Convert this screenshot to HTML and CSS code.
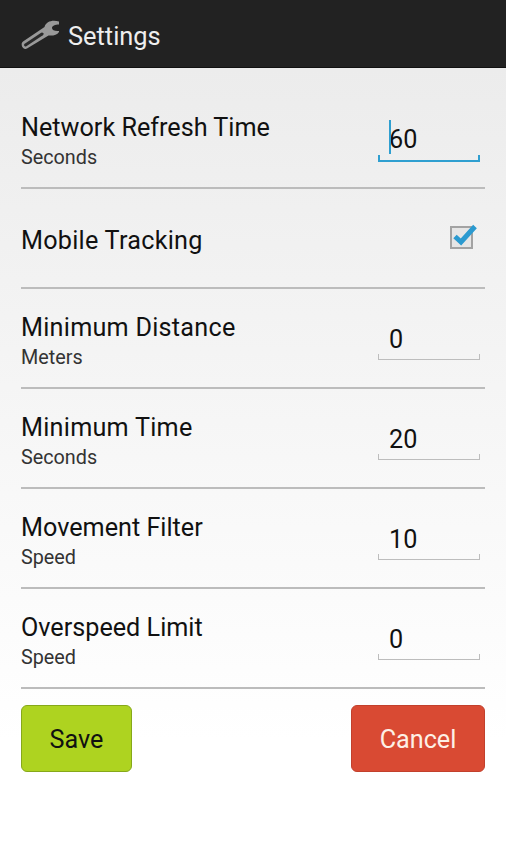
FILE: index.html
```html
<!DOCTYPE html>
<html lang="en">

<head>
  <meta charset="UTF-8">
  <title>Settings</title>
  <meta name="viewport" content="width=device-width, initial-scale=1.0">
  <link rel="stylesheet" href="styles.css">
</head>

<body>
  <header class="action-bar">
    <svg class="wrench" width="40" height="32" viewBox="0 0 40 32">
      <path fill="#999" d="M39 2.500C33 .5 26 2 24.500 8L3 22.500C-.5 25.500 3.500 31.500 7 29.500L28.500 16.500C33 17 37 16 39 13L39 12C35 12.500 32 11 32 9 32 7 35 5.500 39 5.500z" />
      <path fill="none" stroke="#2a2a2a" stroke-width="3" stroke-linecap="round" d="M5.500 26 22 15" />
    </svg>
    <span class="bar-title">Settings</span>
  </header>

  <main class="settings">
    <div class="row">
      <div class="labels">
        <div class="name">Network Refresh Time</div>
        <div class="unit">Seconds</div>
      </div>
      <div class="field focused"><span class="caret"></span>60</div>
    </div>

    <div class="row">
      <div class="labels single">
        <div class="name wide">Mobile Tracking</div>
      </div>
      <svg class="check" width="30" height="28" viewBox="0 0 30 28">
        <rect x="2" y="5" width="21" height="21" fill="#e6e6e6" stroke="#a3a3a3" stroke-width="2" />
        <path fill="none" stroke="#2b9ad0" stroke-width="5" d="M6 14.500 12 20 26 4.500" />
      </svg>
    </div>

    <div class="row">
      <div class="labels">
        <div class="name wide">Minimum Distance</div>
        <div class="unit">Meters</div>
      </div>
      <div class="field">0</div>
    </div>

    <div class="row">
      <div class="labels">
        <div class="name wide">Minimum Time</div>
        <div class="unit">Seconds</div>
      </div>
      <div class="field">20</div>
    </div>

    <div class="row">
      <div class="labels">
        <div class="name">Movement Filter</div>
        <div class="unit">Speed</div>
      </div>
      <div class="field">10</div>
    </div>

    <div class="row">
      <div class="labels">
        <div class="name">Overspeed Limit</div>
        <div class="unit">Speed</div>
      </div>
      <div class="field">0</div>
    </div>

    <div class="actions">
      <button class="btn btn-save">Save</button>
      <button class="btn btn-cancel">Cancel</button>
    </div>
  </main>
</body>

</html>
```

FILE: styles.css
```css
html,
body {
  height: 100%;
}

body {
  margin: 0;
  font-family: Roboto, Arial, sans-serif;
  color: #111;
  background: linear-gradient(#ececec 68px, #ffffff 740px);
  overflow: hidden;
}

.action-bar {
  display: flex;
  align-items: center;
  gap: 8px;
  height: 68px;
  box-sizing: border-box;
  padding: 3px 0 0 20px;
  background: #222;
  border-bottom: 1px solid #111;
}

.bar-title {
  margin-top: 2px;
  color: #eee;
  font-size: 25.400px;
}

.settings {
  padding: 21px 21px 0;
}

.row {
  display: flex;
  align-items: center;
  justify-content: space-between;
  height: 98px;
  border-bottom: 2px solid #bcbcbc;
}

.labels {
  padding-top: 9px;
}

.labels.single {
  padding-top: 6px;
}

.name {
  font-size: 25.200px;
  line-height: 30px;
}

.name.wide {
  letter-spacing: 0.25px;
}

.unit {
  margin-top: 1px;
  font-size: 19.800px;
  line-height: 28px;
  color: #333;
}

.field {
  position: relative;
  width: 102px;
  height: 40px;
  box-sizing: border-box;
  margin: 4px 5px 0 0;
  padding-left: 11px;
  font-size: 25.200px;
  line-height: 40px;
  border-bottom: 1px solid #bdbdbd;
}

.field::before,
.field::after {
  content: "";
  position: absolute;
  bottom: 0;
  width: 1px;
  height: 5px;
  background: #bdbdbd;
}

.field::before {
  left: 0;
}

.field::after {
  right: 0;
}

.field.focused {
  height: 42px;
  margin-bottom: -2px;
  border-bottom: 2px solid #2f9fd0;
}

.field.focused::before,
.field.focused::after {
  width: 2px;
  background: #2f9fd0;
}

.caret {
  position: absolute;
  left: 11px;
  top: 0;
  width: 2px;
  height: 34px;
  background: #2f9fd0;
}

.check {
  margin: 0 6px 4px 0;
}

.actions {
  display: flex;
  justify-content: space-between;
  padding-top: 16px;
}

.btn {
  height: 67px;
  font-family: inherit;
  font-size: 25.200px;
  border-radius: 6px;
  padding: 2px 0 0;
}

.btn-save {
  width: 111px;
  color: #111;
  background: #aed320;
  border: 1px solid #86a81a;
}

.btn-cancel {
  width: 134px;
  color: #fdf0e6;
  background: #d94a33;
  border: 1px solid #c2402c;
}
```
